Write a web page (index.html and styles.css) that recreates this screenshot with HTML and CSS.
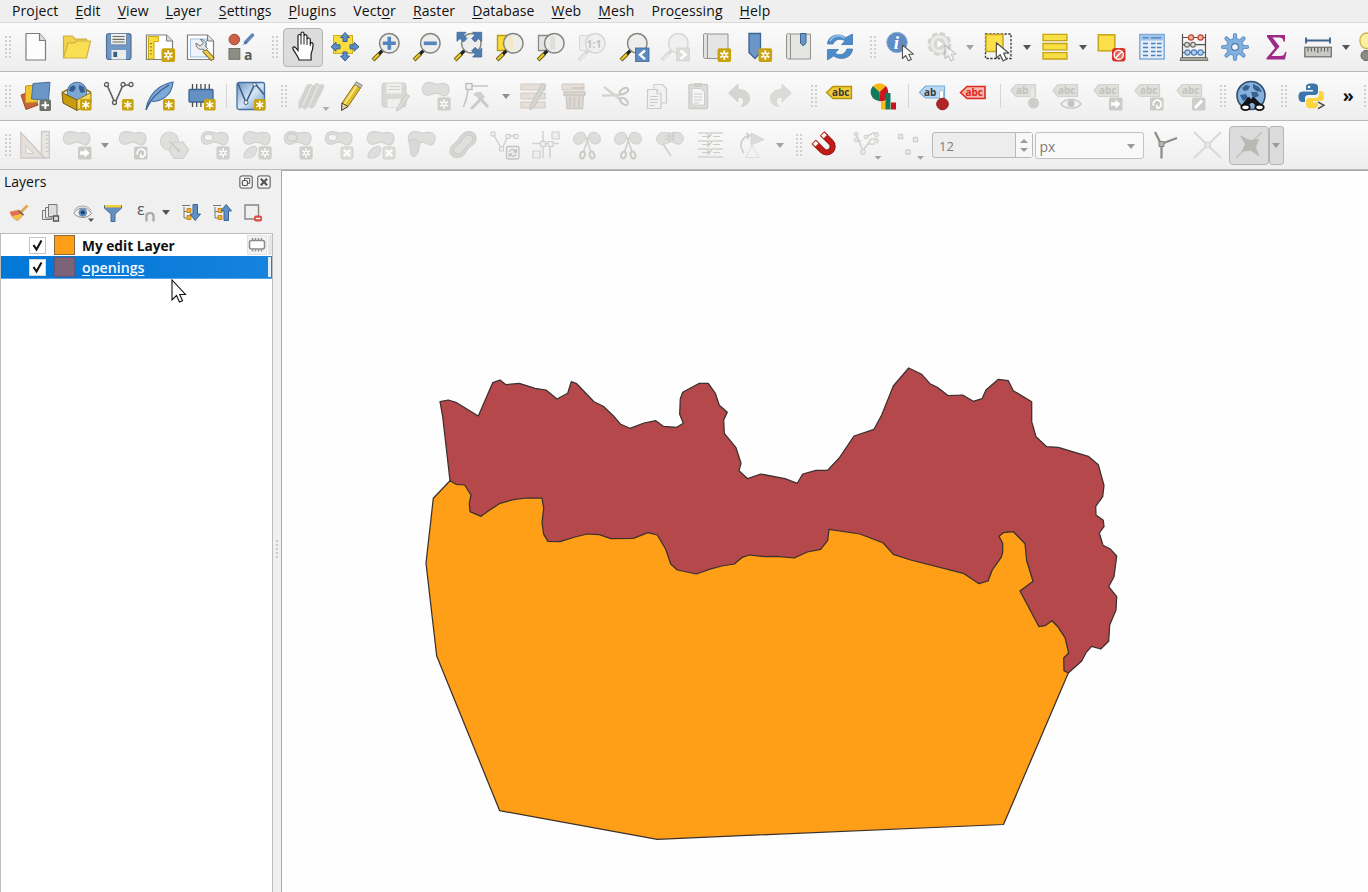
FILE: index.html
```html
<!DOCTYPE html>
<html lang="en">
<head>
<meta charset="utf-8">
<title>QGIS</title>
<link rel="stylesheet" href="styles.css">
</head>
<body>
<svg class="defs" aria-hidden="true">
  <defs>
    <linearGradient id="blueg" x1="0" y1="0" x2="1" y2="1"><stop offset="0" stop-color="#6a97c5"/><stop offset=".5" stop-color="#d6e6f5"/><stop offset="1" stop-color="#5f92c4"/></linearGradient>
    <linearGradient id="scroll" x1="0" x2="1"><stop offset="0" stop-color="#bdbdbd"/><stop offset=".3" stop-color="#e8e8e8"/><stop offset="1" stop-color="#dcdcdc"/></linearGradient>
    <g id="star"><rect x="16.500" y="16.300" width="13.600" height="13.600" rx="2" fill="#c9a30f"/><path d="M23.300 18.500v9.200M19.300 20.800l8 4.600M19.300 25.400l8-4.600" stroke="#fff" stroke-width="1.900"/><circle cx="23.300" cy="23.100" r="1.200" fill="#c9a30f"/></g>
    <g id="aster"><rect x="18" y="18" width="11.600" height="11.600" rx="1.500" fill="#c9a30f"/><path d="M23.800 19.800v8M20.300 21.800l7 4M20.300 25.800l7-4" stroke="#fff" stroke-width="1.500"/></g>
    <g id="gstar"><rect x="16.500" y="16.300" width="13.200" height="13.200" rx="2" fill="#cfcfcb"/><path d="M23.100 18.500v9M19.300 20.700l7.600 4.400M19.300 25.100l7.600-4.400" stroke="#fff" stroke-width="1.600"/><circle cx="23.100" cy="22.900" r="1.200" fill="#cfcfcb"/></g>
    <g id="gx"><rect x="17" y="17" width="12" height="12" rx="2" fill="#dededb" stroke="#cfcfcb"/><path d="M20 20l6 6M26 20l-6 6" stroke="#fff" stroke-width="2.200"/></g>
    <g id="garrow"><rect x="16" y="16.500" width="13.500" height="13" rx="1.500" fill="#cbcbc7"/><path d="M18 21.300h4.500v-2.800l5 4.500-5 4.500v-2.800H18z" fill="#fff"/></g>
    <g id="grot"><rect x="16" y="16.500" width="13.500" height="13" rx="1.500" fill="#cbcbc7"/><path d="M19.500 24.500a4 4 0 1 1 4.500 2.500M26 27h-3.200v-3.200" fill="none" stroke="#fff" stroke-width="1.700"/></g>
    <path id="blob" d="M1.300 7.500C1.500 3 5.500 1.200 9.500 1.700c3 .4 5 1.800 8.500 1.200 4-.8 9.500-1 10 4.300.3 3-1 8.300-5.500 7.600-3-.5-4.500-2.600-8-2.600-3.500.1-5.500 2.800-9 2C2 13.200 1.200 10.500 1.300 7.500z" fill="#dddfdd" stroke="#d1d2cf" stroke-width="1.200"/>
    <path id="drop" d="M2 26c0-4 4-8.500 9-9.500 3-.5 4 1 3.500 4-.8 5-4 7.500-9 7.500-2 0-3.500-.5-3.500-2z" fill="#dddfdd" stroke="#d1d2cf" stroke-width="1.200"/>
    <g id="lens"><path d="M8.700 21.500L2 28" stroke="#6b5a10" stroke-width="4"/><path d="M8.300 21.800L2.500 27.500" stroke="#ecc829" stroke-width="2.200"/><path d="M11.500 18.500L9 21" stroke="#222" stroke-width="3.200" stroke-linecap="round"/><circle cx="18.300" cy="11.300" r="9.800" fill="#ebebea" fill-opacity=".92" stroke="#85857f" stroke-width="1.500"/></g>
    <g id="glens"><path d="M11 19l-9 9" stroke="#d5d5d2" stroke-width="3.400"/><path d="M9 21.500L3 27.500" stroke="#eee" stroke-width="1.400"/><circle cx="18.300" cy="11.300" r="9.800" fill="#efefef" fill-opacity=".85" stroke="#d6d6d3" stroke-width="1.500"/></g>
    <path id="gtag" d="M1 9.500l5-6h19.500v12H6z" fill="#dfdfdb" stroke="#d2d2ce" stroke-width="1.200"/>
    <path id="ptr" d="M0 0v13.500l3.300-3 2.500 5.300 3-1.400-2.500-5.200h4.600z" fill="#fff" stroke="#55554f" stroke-width="1.100" stroke-linejoin="round"/>
    <g id="gcut"><path d="M1.500 9C2 4.500 6 2 9.500 2.300c3 .3 4 2 4 4.200 0 4-2 7-6.500 7.800-3.500.5-5.800-2-5.500-5.300zM28.500 9C28 4 24.500 2 21 2.300c-3 .3-4.500 2-4.500 4.200 0 4 2 7 6.500 7.500 3.500.3 5.500-2 5.500-5z" fill="#dcdedc" stroke="#d0d1ce"/><path d="M14 7l5 15M16.500 7L11.500 22" stroke="#d2d2ce" stroke-width="1.800"/><ellipse cx="10.500" cy="25" rx="2.300" ry="3.500" transform="rotate(20 10.500 25)" fill="none" stroke="#cbcbc7" stroke-width="2"/><ellipse cx="20" cy="25" rx="2.300" ry="3.500" transform="rotate(-20 20 25)" fill="none" stroke="#cbcbc7" stroke-width="2"/></g>
  </defs>
</svg>

<nav class="menubar">
  <span>Pro<u>j</u>ect</span><span><u>E</u>dit</span><span><u>V</u>iew</span><span><u>L</u>ayer</span><span><u>S</u>ettings</span><span><u>P</u>lugins</span><span>Vect<u>o</u>r</span><span><u>R</u>aster</span><span><u>D</u>atabase</span><span><u>W</u>eb</span><span><u>M</u>esh</span><span>Pro<u>c</u>essing</span><span><u>H</u>elp</span>
</nav>

<div class="toolbar">
  <i class="handle first"></i>
  <button class="tb"><svg viewBox="0 0 30 30"><path d="M5 1.500h13.500l6 7V28H5z" fill="#fdfdfd" stroke="#7d7d79" stroke-width="1.200"/><path d="M18.500 1.500v7h6" fill="#ddd" stroke="#7d7d79" stroke-width="1.200"/></svg></button>
  <button class="tb"><svg viewBox="0 0 30 30"><path d="M1.500 25.500V4h9l2.500 3.200h11.500v7" fill="#f3d34b" stroke="#cdae3c" stroke-width="1.200"/><path d="M1.500 26L6 10.800h6.500L14.500 9h14L24.500 26z" fill="#fadf52" stroke="#cfb040" stroke-width="1.200"/></svg></button>
  <button class="tb"><svg viewBox="0 0 30 30"><rect x="2.500" y="1.500" width="24.500" height="26" rx="2.500" fill="#7198c4" stroke="#4c6e96" stroke-width="1.200"/><path d="M6.500 1.500h16v11.300h-16z" fill="#ececea" stroke="#6580a0" stroke-width=".8"/><path d="M8.500 4.500h12M8.500 7.300h12M8.500 10h12" stroke="#6b6b66" stroke-width="1.200"/><rect x="7.500" y="18" width="14.500" height="9.500" fill="#ececea"/><rect x="9.300" y="19.800" width="3.800" height="5.200" fill="#355e88"/></svg></button>
  <button class="tb"><svg viewBox="0 0 30 30"><path d="M1.500 3h20l6 6v18.500h-26z" fill="#fff" stroke="#7d7d79" stroke-width="1.200"/><path d="M21.500 3v6h6" fill="#ddd" stroke="#7d7d79"/><path d="M3.500 4.500h10v5H9V27H3.500z" fill="#f8dc3f" stroke="#c9a81c"/><path d="M5 22h2M5 18.500h2M5 15h2M5 11.500h2" stroke="#9a8010"/><use href="#star"/></svg></button>
  <button class="tb"><svg viewBox="0 0 30 30"><path d="M1.500 3h20l6 6v18.500h-26z" fill="#fff" stroke="#7d7d79" stroke-width="1.200"/><path d="M21.500 3v6h6" fill="#ddd" stroke="#7d7d79"/><rect x="4.500" y="7" width="16" height="18" fill="#eef4fa" stroke="#9fc0e0"/><path d="M18 18l9 9.500" stroke="#7d6a20" stroke-width="5"/><path d="M18.500 18.500l8 8.500" stroke="#f3cf4b" stroke-width="3"/><path d="M10 11c-.5 5 4 7.500 7 6l2 2 2.500-2.500-2-2c1.500-3.500-.5-7-5-7l3 3.500-3.500 3z" fill="#e3e3df" stroke="#74746f"/></svg></button>
  <button class="tb"><svg viewBox="0 0 30 30"><circle cx="7.300" cy="7.500" r="5.300" fill="#cb6049" stroke="#a54632"/><path d="M25.500 3l-7 7.500" stroke="#6089bb" stroke-width="3.500" stroke-linecap="round"/><path d="M19 9l-3.500 4.500 4.500-3" fill="#48678c"/><rect x="2" y="16.500" width="10.800" height="10.800" fill="#8c8f85" stroke="#6d7066"/><text x="17" y="27.500" class="glyph-a">a</text></svg></button>
  <i class="handle"></i>
  <button class="tb on"><svg viewBox="0 0 30 30"><path d="M11 27.500c-1.500-4.500-5-7.500-6.200-11.200-.3-1.500 1.800-2 3-.3L10 18.500V4c0-2 2.800-2 3 0V1.500c.2-2 2.800-2 3 0V4c.3-2 3-1.800 3 .3V7c.4-1.500 3.300-1.500 3.300.8V12c.5-2 2.800-1.700 2.800.3 0 5-.8 6.700-2 9.400V28H11z" fill="#fff" stroke="#1d1d1d" stroke-width="1.200"/><path d="M13 4v8.500M16 4v8.500M19 7v6M22.300 11v3" stroke="#1d1d1d"/></svg></button>
  <button class="tb"><svg viewBox="0 0 30 30"><rect x="3.500" y="3.500" width="19" height="18" fill="#f9dd3f" stroke="#cfae1b"/><path d="M15 .5l4.500 5H17v4h-4v-4h-2.500zM15 29l4.500-5H17v-4h-4v4h-2.500zM1 14.800l5-4.500v2.500h4v4H6v2.500zM29 14.800l-5-4.500v2.500h-4v4h4v2.500z" fill="#5c8dc4" stroke="#365f8f"/></svg></button>
  <button class="tb"><svg viewBox="0 0 30 30"><use href="#lens"/><path d="M18.300 4.800v13M11.800 11.300h13" stroke="#5585bd" stroke-width="3.600"/></svg></button>
  <button class="tb"><svg viewBox="0 0 30 30"><use href="#lens"/><path d="M11.800 11.300h13" stroke="#5585bd" stroke-width="3.600"/></svg></button>
  <button class="tb"><svg viewBox="0 0 30 30"><use href="#lens"/><path d="M4 .3h9L10.500 3l3.500 3.500-3.500 3.500L7 6.500 4 9.300zM28.700.3h-9L22.200 3l-3.500 3.500 3.500 3.500 3.500-3.500 3 2.800zM28.700 25h-9l2.500-2.700-3.500-3.500 3.500-3.500 3.500 3.500 3-2.800z" fill="#4f7db3" stroke="#3d6795" stroke-width=".8"/></svg></button>
  <button class="tb"><svg viewBox="0 0 30 30"><path d="M2.500 3.500h13v15h-13z" fill="#f9dc3c" stroke="#bb9b16" stroke-width="1.400"/><use href="#lens"/><path d="M14 6l4-1.500v14l-4-2z" fill="#f5e9c4"/></svg></button>
  <button class="tb"><svg viewBox="0 0 30 30"><path d="M2.500 3.500h13v15h-13z" fill="#e4e4e2" stroke="#8a8a86" stroke-width="1.300"/><use href="#lens"/><path d="M14 5l5-1v14l-5-1.500z" fill="#dededc"/></svg></button>
  <button class="tb"><svg viewBox="0 0 30 30"><path d="M2.500 3.500h13v15h-13z" fill="#efefef" stroke="#d6d6d3"/><use href="#glens"/><text x="9.500" y="15.500" class="one">1:1</text></svg></button>
  <button class="tb"><svg viewBox="0 0 30 30"><use href="#lens"/><rect x="16.500" y="16" width="13.500" height="13.500" fill="#5b8ac0" stroke="#3d6795" stroke-width=".8"/><path d="M26 18.500l-5 4.300 5 4.300" fill="none" stroke="#fff" stroke-width="2.400"/></svg></button>
  <button class="tb"><svg viewBox="0 0 30 30"><use href="#glens"/><rect x="16.500" y="16" width="13" height="13" fill="#dcdcda" stroke="#d4d4d1" stroke-width=".8"/><path d="M20.500 18.500l5 4.200-5 4.200" fill="none" stroke="#fff" stroke-width="2.400"/></svg></button>
  <button class="tb"><svg viewBox="0 0 30 30"><path d="M6 2h21v24.500H6z" fill="#e5e5e4" stroke="#91918d"/><path d="M6.500 26.500h-2c-2 0-2-1.500-2-3V3c0-2 4-2 4 0z" fill="url(#scroll)" stroke="#91918d"/><use href="#star"/></svg></button>
  <button class="tb"><svg viewBox="0 0 30 30"><path d="M7 1.500h11.500v19l-5.500 6-6-6z" fill="#6b96c8" stroke="#3d638f" stroke-width="1.300"/><use href="#star"/></svg></button>
  <button class="tb"><svg viewBox="0 0 30 30"><path d="M6 2h20.500v25H6z" fill="#e5e5e4" stroke="#91918d"/><path d="M6.500 27h-2c-2 0-2-1.500-2-3V3c0-2 4-2 4 0z" fill="url(#scroll)" stroke="#91918d"/><path d="M16.500 1.500h5.500v9.500l-2.800 3-2.700-3z" fill="#6b96c8" stroke="#3d638f"/></svg></button>
  <button class="tb"><svg viewBox="0 0 30 30"><path d="M2.500 12C3 3 14 .5 21 5.500L27.500 2v10.500h-11L20 9c-4-3-10-2-12 3zM27.500 17c-.5 9-11.500 12-19 7L2.500 28V17.500h11L10 21c4 3 10 2 12-4z" fill="#4d8cca" stroke="#3f78b2" stroke-width=".8"/><path d="M5 9C8 3 15 2.500 20 6" fill="none" stroke="#8fbbe4" stroke-width="2"/></svg></button>
  <i class="handle"></i>
  <button class="tb"><svg viewBox="0 0 30 30"><circle cx="11" cy="10.500" r="10.300" fill="#5e8cc3" stroke="#8fb1d8" stroke-width=".8"/><text x="7.800" y="17.200" class="info">i</text><use href="#ptr" x="16.500" y="13"/></svg></button>
  <button class="tb"><svg viewBox="0 0 30 30"><circle cx="12.500" cy="12" r="10.500" fill="#ececea" stroke="#d4d4d1" stroke-width="3" stroke-dasharray="5.500 2.750"/><circle cx="12.500" cy="12" r="9.500" fill="#ececea" stroke="#d0d0cd"/><circle cx="12.500" cy="12" r="6" fill="#d8d8d5"/><path d="M10.500 8.500l5.500 3.500-5.500 3.500z" fill="#fff"/><use href="#ptr" x="18" y="13" opacity=".3"/></svg></button>
  <i class="dd"></i>
  <button class="tb"><svg viewBox="0 0 30 30"><rect x="2.500" y="2" width="25.500" height="24.500" fill="#f4f4f3" stroke="#333" stroke-width="1.300" stroke-dasharray="2.300 1.500"/><rect x="3" y="2.500" width="17" height="17" fill="#fbe04b" stroke="#c9a91d" stroke-width="1.600"/><use href="#ptr" x="12.500" y="11" transform="translate(-1 -2) scale(1.150)"/></svg></button>
  <i class="dd dark"></i>
  <button class="tb"><svg viewBox="0 0 30 30"><path d="M3 2.300h24v6.300H3zM3 11.500h24v6.300H3zM3 20.700h24V27H3z" fill="#f8df43" stroke="#c6a413" stroke-width="1.300"/></svg></button>
  <i class="dd dark"></i>
  <button class="tb"><svg viewBox="0 0 30 30"><rect x="2.300" y="2.800" width="16.500" height="16" fill="#fbe04b" stroke="#c9a91d" stroke-width="1.600"/><rect x="16" y="16" width="13.500" height="13.500" rx="3" fill="#d9332a"/><circle cx="22.700" cy="22.700" r="4.600" fill="#e36a60" stroke="#fff" stroke-width="1.400"/><path d="M19.700 25.700l6-6" stroke="#fff" stroke-width="1.500"/></svg></button>
  <button class="tb"><svg viewBox="0 0 30 30"><rect x="2.800" y="2.500" width="24.400" height="24.500" fill="#e3eefa" stroke="#82abd8" stroke-width="1.500"/><path d="M3 3h24v5.500H3z" fill="#9fc4ec"/><path d="M6 5.800h5.500M14 5.800h10M6 11.500h5M14 11.500h4.500M20 11.500h4.500M6 15.500h5M14 15.500h4.500M20 15.500h4.500M6 19.500h5M14 19.500h4.500M20 19.500h4.500M6 23.500h5M14 23.500h4.500M20 23.500h4.500" stroke="#4c7fb8" stroke-width="1.300"/></svg></button>
  <button class="tb"><svg viewBox="0 0 30 30"><path d="M3.500 2v24M26.500 2v24M3.500 5.500h23M3.500 12.700h23M3.500 20.500h23" stroke="#55554f" stroke-width="1.200"/><path d="M2 25.500h26l1 3H1z" fill="#a7a79f" stroke="#62625b" stroke-width=".8"/><g stroke-width="1.200"><circle cx="12" cy="5.500" r="2.600" fill="#f6b6a4" stroke="#c23f2c"/><circle cx="21.500" cy="5.500" r="2.600" fill="#f6b6a4" stroke="#c23f2c"/><circle cx="8" cy="12.700" r="2.400" fill="#ddd" stroke="#6e6e68"/><circle cx="14" cy="12.700" r="2.400" fill="#ddd" stroke="#6e6e68"/><circle cx="8.500" cy="20.500" r="2.600" fill="#b7d2f0" stroke="#4c7fb8"/><circle cx="15" cy="20.500" r="2.600" fill="#b7d2f0" stroke="#4c7fb8"/><circle cx="21.500" cy="20.500" r="2.600" fill="#b7d2f0" stroke="#4c7fb8"/></g></svg></button>
  <button class="tb"><svg viewBox="0 0 30 30"><g stroke="#5b8fc6" stroke-width="4.200" stroke-linecap="round"><path d="M15 3v24M3 15h24M6.500 6.500l17 17M23.500 6.500l-17 17"/></g><circle cx="15" cy="15" r="8.500" fill="#84b0e0" stroke="#5b8fc6"/><g stroke="#84b0e0" stroke-width="2.400" stroke-linecap="round"><path d="M15 3v24M3 15h24M6.500 6.500l17 17M23.500 6.500l-17 17"/></g><circle cx="15" cy="15" r="3.400" fill="#f5f5f5" stroke="#4a7bb0" stroke-width="1.200"/></svg></button>
  <button class="tb"><svg viewBox="0 0 30 30"><path d="M6 3h18v6.500h-1.500C22 6.500 21 5.500 18 5.500h-6.500l7 9L10.500 24H19c3 0 4.500-1 5-4h1.500L24 27.500H5.500V26l8.500-10L6 4.800z" fill="#9e2a88"/></svg></button>
  <button class="tb"><svg viewBox="0 0 30 30"><path d="M3 8.500h24M3 5.500v6M27 5.500v6" stroke="#3f638e" stroke-width="1.900"/><rect x="1.800" y="15.300" width="26.500" height="9.500" fill="#c9c9c5" stroke="#74746e" stroke-width="1.300"/><path d="M5 16v3.500M8.300 16v3.500M11.600 16v3.500M14.900 16v5M18.200 16v3.500M21.500 16v3.500M24.800 16v3.500" stroke="#55554f"/></svg></button>
  <i class="dd dark"></i>
  <button class="tb"><svg viewBox="0 0 30 30"><rect x="1" y="1" width="26" height="15.500" rx="7" fill="#fcf0a0" stroke="#cbb24a" stroke-width="1.300"/><circle cx="7" cy="23.500" r="5" fill="#8c8c85" stroke="#62625b"/></svg></button>
</div>

<div class="toolbar">
  <i class="handle first"></i>
  <button class="tb"><svg viewBox="0 0 30 30"><path d="M0 14l11-4 6 14-12 4.500z" fill="#c5653b" stroke="#a04a26"/><path d="M4.500 5l12-1v17l-12 1z" fill="#f3c62f" stroke="#c49714"/><path d="M12 2.500l17-1.300-1.500 18-17-1.200z" fill="#6b96c8" stroke="#486f9c"/><rect x="18.500" y="18.500" width="11.500" height="11.500" rx="1.500" fill="#6f7268"/><path d="M24.300 20.500v7.500M20.500 24.200H28" stroke="#fff" stroke-width="2"/></svg></button>
  <button class="tb"><svg viewBox="0 0 30 30"><circle cx="15" cy="11" r="9.800" fill="#7ba7d4" stroke="#476f9d"/><path d="M8 6l4-2 2 3-3 4-4-1zM17 4l5 2 1 5-4 1-2-4z" fill="#365f8f"/><path d="M0 11.500l15 7.500v10.500L1 22z" fill="#c99c0e" stroke="#73590b"/><path d="M15 19l14-7.500V22l-14 7.500z" fill="#f4d863" stroke="#8f7118"/><path d="M0 11.500l6-3M29 11.500l-5-3" stroke="#8f7118" stroke-width="1.500"/><use href="#aster"/></svg></button>
  <button class="tb"><svg viewBox="0 0 30 30"><path d="M3 4l8 18 8-18h8" fill="none" stroke="#5d5d58" stroke-width="1.600"/><g fill="#fff" stroke="#5d5d58" stroke-width="1.300"><circle cx="2.500" cy="3.500" r="2"/><circle cx="10.500" cy="21.500" r="2"/><circle cx="19" cy="3.500" r="2"/><circle cx="27" cy="3.500" r="2"/></g><use href="#aster"/></svg></button>
  <button class="tb"><svg viewBox="0 0 30 30"><path d="M1 28.500C2 20 7 11 15 6c4-2.500 9-4 13-5-.5 6-3 12-9 16-4 2.500-9 3.500-12 3.500" fill="#7da9d8" stroke="#466f9e" stroke-width="1.200"/><path d="M1 29C4 20 12 11 24 4" fill="none" stroke="#355d8b" stroke-width="1.300"/><use href="#aster"/></svg></button>
  <button class="tb"><svg viewBox="0 0 30 30"><path d="M6.500 3v6M10.700 3v6M14.900 3v6M19.100 3v6M23.300 3v6M6.500 20v6M10.700 20v6M14.900 20v6" stroke="#4e4e49" stroke-width="1.300"/><rect x="3" y="8.500" width="24" height="12.500" rx="1" fill="#6590c4" stroke="#3d6592" stroke-width="1.300"/><use href="#aster"/></svg></button>
  <i class="sep"></i>
  <button class="tb"><svg viewBox="0 0 30 30"><rect x="1" y="1.500" width="27.500" height="27" rx="2" fill="url(#blueg)" stroke="#44709f" stroke-width="1.300"/><path d="M2 2.500l8 19 9-19 9 11" fill="none" stroke="#3d5f86" stroke-width="1.600"/><circle cx="10" cy="21.500" r="2" fill="#fff" stroke="#3d5f86"/><circle cx="18.500" cy="3.500" r="1.700" fill="#fff" stroke="#3d5f86"/><use href="#aster"/></svg></button>
  <i class="handle"></i>
  <button class="tb"><svg viewBox="0 0 30 30"><path d="M1.500 22L10 4l4-1 2 2 4-3 2.500 2 3.500-.5 1 2.500L17 26l-3.500 1.500-1-2.500-5 3.500-2-2.500-3.500 2z" fill="#d2d2cf" stroke="#d9d9d6"/><path d="M6 24L14.500 5M12 25L21 5" stroke="#e9e9e7" stroke-width="1.200"/><path d="M25.500 26h7l-3.500 4z" fill="#aeaeab"/></svg></button>
  <button class="tb"><svg viewBox="0 0 30 30"><path d="M3 22L15.500 3.500l6 3.500L9 25.500 3 29z" fill="#e3bf2a" stroke="#8a7318"/><path d="M5.500 23L17.500 5" stroke="#fae98c" stroke-width="1.800"/><path d="M15.500 3.500L17.300.8l6 3.500L21.500 7z" fill="#bdbdb9" stroke="#8a8a86"/><path d="M3 22l6 3.500L2.500 29.500z" fill="#e6cfa0" stroke="#444"/></svg></button>
  <button class="tb"><svg viewBox="0 0 30 30"><rect x="2" y="2" width="24" height="24" rx="2.500" fill="#d8d8d5" stroke="#cececb"/><path d="M6.500 2.500h15v10h-15zM7.500 18h13v8h-13z" fill="#efefed"/><path d="M8.500 5.500h11M8.500 8.500h11" stroke="#d0d0cd"/><path d="M17 27l9-14 3.500 2-9 13-4 2z" fill="#dcdcd9" stroke="#c9c9c6"/></svg></button>
  <button class="tb"><svg viewBox="0 0 30 30"><use href="#blob"/><use href="#gstar"/></svg></button>
  <button class="tb"><svg viewBox="0 0 30 30"><path d="M6.500 5C6 13 4 20 1.500 26M6.500 5H26" fill="none" stroke="#c6c6c3" stroke-width="1.500"/><rect x="4" y="2.500" width="6" height="6" fill="#f2f2f2" stroke="#bababa" stroke-width="1.300"/><path d="M9 28l13-13M14 13l12 13" stroke="#cbcbc8" stroke-width="3"/><path d="M11 14c2-3 5-4 8-3l3 4-4 2z" fill="#d0d0cd"/></svg></button>
  <i class="dd mid"></i>
  <button class="tb"><svg viewBox="0 0 30 30"><path d="M2 3h24v6H2zM2 12h24v6H2zM2 21h24v6H2z" fill="#e6dfd8" stroke="#d2ccc6" stroke-width="1.200"/><path d="M11 25L23 2.500l4 2L15 26l-4 3z" fill="#d4d4d1" stroke="#c4c4c1"/></svg></button>
  <button class="tb"><svg viewBox="0 0 30 30"><path d="M2 3h22v6H2z" fill="#e6dfd8" stroke="#cfc9c3"/><path d="M4 11h21v3H4zM6 14h17.500l-1 13.500H7z" fill="#ddd8d3" stroke="#cac6c1" stroke-width="1.300"/><path d="M10 16v10M14.500 16v10M19 16v10M12 7h12" stroke="#cac6c1" stroke-width="1.400"/></svg></button>
  <button class="tb"><svg viewBox="0 0 30 30"><path d="M1 14.500l19-.5M3 6l17 13" stroke="#d3d3d0" stroke-width="2.400"/><ellipse cx="23" cy="10" rx="4.500" ry="2.500" transform="rotate(-30 23 10)" fill="none" stroke="#c6c6c3" stroke-width="2"/><ellipse cx="23" cy="20.500" rx="4.500" ry="2.700" transform="rotate(40 23 20.500)" fill="none" stroke="#c6c6c3" stroke-width="2"/></svg></button>
  <button class="tb"><svg viewBox="0 0 30 30"><g fill="#f2f2f2" stroke="#cbcbc8" stroke-width="1.200"><path d="M11 3.500h8.500l4 4V22H11z"/><path d="M4.500 8.500H14l4 4.500v14.500H4.500z"/><path d="M14 8.500V13h4M7 15.500h8M7 18.500h8M7 21.500h8M7 24.500h5"/></g></svg></button>
  <button class="tb"><svg viewBox="0 0 30 30"><rect x="5" y="3.500" width="18.500" height="24" rx="1" fill="#dcdcda" stroke="#cbcbc8" stroke-width="1.400"/><path d="M8 7.500h9l3.500 3.500v13H8z" fill="#f5f5f5" stroke="#cdcdca"/><path d="M10 2h8v4h-8z" fill="#cdcdca"/><path d="M10 13h8M10 16h8M10 19h8M10 22h5" stroke="#cdcdca"/></svg></button>
  <button class="tb"><svg viewBox="0 0 30 30"><path d="M3.500 12l9.500-9v5.500c8 0 12 4 11.500 9.500 0 4-3.500 7-8.500 7.500 3-2.500 5-9-3-9.500v5z" fill="#d5d5d1" stroke="#cecdca" stroke-width=".8"/></svg></button>
  <button class="tb"><svg viewBox="0 0 30 30"><path d="M25.500 12L16 3v5.500C8 8.500 4 12.500 4.500 18c0 4 3.500 7 8.500 7.500-3-2.500-5-9 3-9.500v5z" fill="#dbdbd8" stroke="#d3d3d0" stroke-width=".8"/></svg></button>
  <i class="handle"></i>
  <button class="tb"><svg viewBox="0 0 30 30"><path d="M-.5 11.500l6.500-6h18.500v12H6z" fill="#f1cb35" stroke="#b6930e" stroke-width="1.300"/><text x="5" y="14.700" class="abc">abc</text></svg></button>
  <button class="tb"><svg viewBox="0 0 30 30"><path d="M10.500 11L4 5a9 9 0 0 1 13 0z" fill="#fab90f"/><path d="M10.500 11L4 5a9 9 0 0 0 6 15z" fill="#14795a"/><path d="M10.500 11L17 5c3 4 3 10-.5 14z" fill="#c5161c"/><path d="M10.500 11L17 19c-2 1.200-5 1.500-7 1z" fill="#c5161c"/><path d="M12 20.500h5v8h-5z" fill="#fab90f"/><path d="M16.500 12h5v16.500h-5z" fill="#14795a"/><path d="M22 21.500h5v7h-5z" fill="#c5161c"/></svg></button>
  <i class="sep"></i>
  <button class="tb"><svg viewBox="0 0 30 30"><path d="M.5 11.500l6-6.500h19v12H6.500z" fill="#b9d9f5" stroke="#78aee0" stroke-width="1.200"/><text x="5" y="14.700" class="abc">ab</text><path d="M22.500 10v12" stroke="#fff" stroke-width="3.600"/><path d="M20.500 18v-7c0-2 4-2 4 0v7" fill="none" stroke="#b5b5b1"/><circle cx="23.500" cy="23" r="5.800" fill="#b02525" stroke="#8e1b1b"/></svg></button>
  <button class="tb"><svg viewBox="0 0 30 30"><path d="M.5 11.500l6.500-6h18v12H7z" fill="#f4b7ae" stroke="#e02720" stroke-width="1.600"/><text x="5.500" y="14.700" class="abc r">abc</text></svg></button>
  <i class="sep"></i>
  <button class="tb"><svg viewBox="0 0 30 30"><use href="#gtag"/><text x="6" y="13.200" class="abc g">ab</text><path d="M22.500 8v12" stroke="#e8e8e6" stroke-width="3"/><circle cx="23.500" cy="22" r="5.500" fill="#cecdca"/></svg></button>
  <button class="tb"><svg viewBox="0 0 30 30"><use href="#gtag"/><text x="6" y="13.200" class="abc g">abc</text><path d="M9 23c4-6 16-6 20 0-4 5.500-16 5.500-20 0z" fill="#f2f2f2" stroke="#c9c9c6" stroke-width="1.400"/><circle cx="19" cy="22.500" r="3.500" fill="#c3c3c0"/></svg></button>
  <button class="tb"><svg viewBox="0 0 30 30"><use href="#gtag"/><text x="6" y="13.200" class="abc g">abc</text><use href="#garrow"/></svg></button>
  <button class="tb"><svg viewBox="0 0 30 30"><use href="#gtag"/><text x="6" y="13.200" class="abc g">abc</text><use href="#grot"/></svg></button>
  <button class="tb"><svg viewBox="0 0 30 30"><use href="#gtag"/><text x="6" y="13.200" class="abc g">abc</text><rect x="16" y="16.500" width="13.500" height="13" rx="1.500" fill="#cecdca"/><path d="M19 27l7-7.500" stroke="#fff" stroke-width="3"/></svg></button>
  <i class="handle"></i>
  <button class="tb"><svg viewBox="0 0 30 30"><circle cx="15" cy="14.500" r="14" fill="#85b0dc" stroke="#2f4d6e" stroke-width="1.600"/><path d="M6 7l4-3 4 1-2 4-4 1zM17 3l6 3 3 5-6-1-3-3zM4 14l6-1 2 4-5 3zM15 11h6l2 4-6 2z" fill="#355f90"/><path d="M5 25l6.500-8.500 2-.5 1.500 2.500 1.500-2.500 2 .5L27 25l-6 1-4-4h-2l-4 4z" fill="#15151a"/><ellipse cx="9.500" cy="26.300" rx="4.200" ry="2.800" fill="#fff" stroke="#111" stroke-width="1.900"/><ellipse cx="23.500" cy="26.300" rx="4.200" ry="2.800" fill="#fff" stroke="#111" stroke-width="1.900"/></svg></button>
  <i class="handle"></i>
  <button class="tb"><svg viewBox="0 0 30 30"><path d="M15 2.500c-6 0-6 2-6 3.500v3h7v1.500H6c-4 0-4.500 3-4.500 5.500s1 5 4 5h2.500v-4c0-2 1.500-3 3.500-3H18c2 0 3-1.500 3-3V6c0-2-1.500-3.500-6-3.500z" fill="#3a76ab"/><path d="M22 10v3.500c0 2-1.500 3.500-3.500 3.500H12c-2 0-3 1-3 3v4c0 2.500 2 3.500 6 3.500s6-1.500 6-3.500v-2.500h-5V20h8c2.500 0 3-3 3-5s-.5-5-3-5z" fill="#fbd53e"/><circle cx="12" cy="6" r="1.300" fill="#fff"/><path d="M21 21l6 3.200-6 3.500" fill="none" stroke="#fff" stroke-width="3"/><path d="M21 21l6 3.200-6 3.500" fill="none" stroke="#55554f" stroke-width="1.600"/></svg></button>
  <span class="more">»</span>
  <i class="handle last"></i>
</div>

<div class="toolbar snap">
  <i class="handle first"></i>
  <button class="tb"><svg viewBox="0 0 30 30"><path d="M.8 2.500l24 25.500H.8z" fill="#e6dfda" stroke="#cccac7" stroke-width="1.300"/><path d="M6 15.500l7.500 8H6z" fill="#f3f3f3" stroke="#cccac7"/><path d="M21.500 1.500h7.800V28h-4.500l-3.300-3.500z" fill="#e9e5e1" stroke="#cccac7" stroke-width="1.300"/><path d="M25.500 5.500h3.500M25.500 9.500h3.500M25.500 13.500h3.500M25.500 17.500h3.500M25.500 21.500h3.500" stroke="#cccac7"/></svg></button>
  <button class="tb"><svg viewBox="0 0 30 30"><use href="#blob"/><use href="#garrow"/></svg></button>
  <i class="dd mid"></i>
  <button class="tb"><svg viewBox="0 0 30 30"><use href="#blob"/><use href="#grot"/></svg></button>
  <button class="tb"><svg viewBox="0 0 30 30"><circle cx="10.500" cy="11" r="9" fill="#dfe0de" stroke="#d2d2cf" stroke-width="1.200"/><path d="M15 12h9l5.500 8-5.500 8.500h-9L10 20z" fill="#dfe0de" stroke="#cfcfcc" stroke-width="1.200"/><path d="M10.500 11l9 9.500" stroke="#c8c8c5" stroke-width="1.300"/><circle cx="19.500" cy="20.500" r="1.500" fill="#c8c8c5"/></svg></button>
  <button class="tb"><svg viewBox="0 0 30 30"><use href="#blob"/><ellipse cx="8.500" cy="7.500" rx="4.500" ry="3.300" fill="#f4f4f4" stroke="#cecdca" stroke-width="1.200"/><use href="#gstar"/></svg></button>
  <button class="tb"><svg viewBox="0 0 30 30"><use href="#blob"/><use href="#drop"/><use href="#gstar"/></svg></button>
  <button class="tb"><svg viewBox="0 0 30 30"><use href="#blob"/><ellipse cx="9" cy="7.500" rx="5" ry="3.800" fill="#e0e1df" stroke="#c9c9c6" stroke-width="1.200"/><use href="#gstar"/></svg></button>
  <button class="tb"><svg viewBox="0 0 30 30"><use href="#blob"/><ellipse cx="8.500" cy="7.500" rx="4.500" ry="3.300" fill="#f4f4f4" stroke="#cecdca" stroke-width="1.200"/><use href="#gx"/></svg></button>
  <button class="tb"><svg viewBox="0 0 30 30"><use href="#blob"/><use href="#drop"/><use href="#gx"/></svg></button>
  <button class="tb"><svg viewBox="0 0 30 30"><use href="#blob"/><path d="M2 11l6-2 5 4-2 10-3.500 4L4 25z" fill="#d9dad6" stroke="#cecfcb"/></svg></button>
  <button class="tb"><svg viewBox="0 0 30 30"><path d="M2 21c0-6 5-7 8-11 3-5 6-8.500 11-8.500 5.500 0 7.500 4 7 8-.6 5.500-5 5.500-8 9.500-3 4.500-5 8.500-10.500 8.500C4.500 27.500 2 25 2 21z" fill="#d6d7d3" stroke="#cbccc8"/><path d="M5.500 21c0-4 5-6 7.500-9.500 2.500-4 4.500-6.500 8-6.500 3 0 4 2 3.500 4.500-.5 3.500-4.500 4.500-7.500 8.500-3 4.500-4 6-7.500 6-2.500 0-4-1-4-3z" fill="#dee0dd" stroke="#c9cac6"/></svg></button>
  <button class="tb"><svg viewBox="0 0 30 30"><path d="M3 4l9 15 6-13h8" fill="none" stroke="#cfcfcc" stroke-width="1.400"/><g fill="#f2f2f2" stroke="#c9c9c6"><path d="M1 2h4v4H1zM16 4.500h4v4h-4zM24 4.500h4v4h-4zM9.500 17h4v4h-4z"/></g><rect x="16.500" y="16.500" width="12.500" height="12.500" rx="1.500" fill="#efefef" stroke="#c2c2bf" stroke-width="1.300"/><path d="M19.300 21.700c1-3 5-3 6.500-.2M26.300 24c-1 3-5 3-6.500.2M26.300 19v3h-3M19.300 27v-3h3" fill="none" stroke="#c2c2bf" stroke-width="1.400"/></svg></button>
  <button class="tb"><svg viewBox="0 0 30 30"><path d="M12 1v27M1 13.500h27M19 14v14" stroke="#d3d3d0" stroke-width="1.600"/><g fill="#efefef" stroke="#cfcfcc" stroke-width="1.200"><path d="M9.500 11.500h5v5h-5zM17 11.500h5v5h-5zM21 2h7v7h-7zM2 21h7v7H2z"/></g></svg></button>
  <button class="tb"><svg viewBox="0 0 30 30"><use href="#gcut"/></svg></button>
  <button class="tb"><svg viewBox="0 0 30 30"><use href="#gcut"/></svg></button>
  <button class="tb"><svg viewBox="0 0 30 30"><path d="M1.500 9C2 4 6 2 10 2.500c4 1 6 1 9 0 6-1 9.500 2 9.300 6-.3 5-4.500 7-8.300 5-3-2-5-2-7.500-.5C7 16 1.500 14 1.500 9z" fill="#dddfdd" stroke="#d1d2cf"/><path d="M10 6h10M10 9h10M14 2v11M18 2v9" stroke="#c9c9c6"/><path d="M8 14l8 12" stroke="#cbcbc8" stroke-width="1.400"/></svg></button>
  <button class="tb"><svg viewBox="0 0 30 30"><path d="M2 3h25M2 11h25M2 19h25M2 27h25" stroke="#d3d3d0" stroke-width="1.300"/><path d="M6 6.500h7l3-2.500M24 6.500h-7M6 14.500h7l3-2.500M24 14.500h-7M6 22.500h7l3-2.500M24 22.500h-7M11 4l3 2.500-3 2M11 12l3 2.500-3 2M11 20l3 2.500-3 2" fill="none" stroke="#cbcbc8" stroke-width="1.200"/></svg></button>
  <button class="tb"><svg viewBox="0 0 30 30"><path d="M14 3l13 6.500-13 5.500z" fill="#dcdddb" stroke="#d3d3d0"/><path d="M15 15l7 12.500H9z" fill="#f2f2f2" stroke="#dededb"/><path d="M7 23C1.500 16 4 8 11.500 5.500M9 3l3.500 2.500L10 9" fill="none" stroke="#cbcbc8" stroke-width="1.500"/></svg></button>
  <i class="dd"></i>
  <i class="handle"></i>
  <button class="tb"><svg viewBox="0 0 30 30"><g transform="rotate(-45 15 15)"><path d="M6 5v11.500a8.500 8.500 0 0 0 17 0V5h-5.200v11.500a3.300 3.300 0 0 1-6.600 0V5z" fill="#c31a17" stroke="#981210"/><path d="M6 4.500h5.200V9H6zM17.800 4.500H23V9h-5.200z" fill="#fff" stroke="#b92b20"/></g></svg></button>
  <button class="tb"><svg viewBox="0 0 30 30"><path d="M4 4l7 17L19 9h6M4 10l5 1M14 7l7-4h5M15 14h8" fill="none" stroke="#d2d2cf" stroke-width="1.700"/><g fill="#e9e9e8" stroke="#cfcfcc"><circle cx="4" cy="4" r="2"/><circle cx="4" cy="10" r="2"/><circle cx="14" cy="7" r="2"/><circle cx="24.500" cy="5" r="2"/><circle cx="24.500" cy="11" r="2"/><circle cx="11" cy="22" r="2.500"/></g><path d="M22.500 26h7L26 29.800z" fill="#a3a3a0"/></svg></button>
  <button class="tb"><svg viewBox="0 0 30 30"><g fill="#efefee" stroke="#cfcfcc" stroke-width="1.300"><path d="M4.500 4.500h4v4h-4zM19.500 7.500h4v4h-4zM12 20h4v4h-4z"/></g><path d="M23 26h7l-3.500 3.800z" fill="#a3a3a0"/></svg></button>
  <div class="spin"><span>12</span><b><i class="up"></i><i class="down"></i></b></div>
  <div class="combo"><span>px</span><i></i></div>
  <button class="tb"><svg viewBox="0 0 30 30"><path d="M4 2l6 12M10 14l16-6M10.500 14v14.500" stroke="#8e8e88" stroke-width="2.300"/><path d="M8 11.500h5v5H8z" fill="#b5b5b0" stroke="#85857f"/></svg></button>
  <button class="tb"><svg viewBox="0 0 30 30"><path d="M2 2l27 26M29 2L2 28" stroke="#d8d8d5" stroke-width="2"/><circle cx="15.500" cy="15" r="3" fill="#e6e6e4" stroke="#d3d3d0"/></svg></button>
  <button class="tb on pair"><svg viewBox="0 0 30 30"><path d="M2 28L28 2" stroke="#c3c3c0" stroke-width="1.600"/><path d="M5.500 5l10 5 10-1-3.500 8 3.500 9.500-9-6-9 1.500 3.500-8z" fill="#b9b9b4"/></svg></button>
  <span class="drop-on"><i></i></span>
</div>

<main class="work">
  <section class="dock">
    <header class="dock-title"><span>Layers</span>
      <svg class="dock-btns" viewBox="0 0 32 14"><g fill="#f4f4f4" stroke="#777" stroke-width="1.300"><rect x=".8" y=".8" width="12.500" height="12.400" rx="2.500"/><rect x="18.700" y=".8" width="12.500" height="12.400" rx="2.500"/></g><path d="M5.500 5V3.300h5.200v5H9" fill="none" stroke="#555"/><rect x="3.300" y="5.500" width="5.200" height="5" rx="1.500" fill="none" stroke="#555" stroke-width="1.200"/><path d="M21.800 3.800l6.300 6.400M28.100 3.800l-6.300 6.400" stroke="#555" stroke-width="2.200"/></svg>
    </header>
    <div class="dock-tools">
      <svg class="t1" viewBox="0 0 20 20"><path d="M1 9l8-2 5 5-5 5.500c-3-.5-7-4-8-8.500z" fill="#f0c545" stroke="#d38b5a" stroke-width=".8"/><path d="M1 9l9-1 2 3-9 2z" fill="#e46a55"/><path d="M12 9l6.500-6.500" stroke="#e0a94e" stroke-width="2.600"/><path d="M9.500 7.500l5 4.500" stroke="#69553a" stroke-width="1.500"/></svg>
      <svg class="t2" viewBox="0 0 20 20"><g fill="#ededed" stroke="#777"><path d="M2.500 7.500h9v9h-9z"/><path d="M5.500 4.500h9V15h-9z"/><path d="M8.500 1.500h8.500v12H8.500z" fill="#ddd"/></g><path d="M13.500 13h5v5h-5z" fill="#ddd" stroke="#555" stroke-width="1.300"/></svg>
      <svg class="t3" viewBox="0 0 22 20"><path d="M1.800 10.500C5 3.500 16 3 19.500 10.500 15 16 6 15.500 1.800 10.500z" fill="#f0f2f4" stroke="#8b8b88"/><circle cx="10.800" cy="9.500" r="4.300" fill="#5f8dbf"/><circle cx="10.800" cy="9.500" r="2" fill="#243e5c"/><path d="M2 7.500C6 1.500 15 1.500 19.500 7.500" fill="none" stroke="#a5a5a2"/><path d="M16 15.500h6l-3 3.500z" fill="#555"/></svg>
      <svg class="t4" viewBox="0 0 20 20"><path d="M2.500 2.500h17v2.700L13 11v7.500H9V11L2.500 5.200z" fill="#6490c2" stroke="#426a98"/><path d="M3 2h16v2.500H3z" fill="#f4cf36"/></svg>
      <svg class="t5" viewBox="0 0 20 20"><text x="2" y="11.500" class="eps">ε</text><path d="M11.500 18.500v-5.500c0-4 7-4 7 0v5.500" fill="none" stroke="#a7a7a4" stroke-width="2.200"/></svg>
      <i class="dd dark"></i>
      <svg class="t6" viewBox="0 0 20 20"><path d="M1 2.500h8M3 4v11h4M3 8.500h4" fill="none" stroke="#777"/><path d="M6 5.500h4v4H6zM6 12.500h4v4H6z" fill="#f2b134" stroke="#c98a1c"/><path d="M12 1.500h4.500v9.500h3l-5.300 6.500L9 11h3z" fill="#5f8fc6" stroke="#386394"/></svg>
      <svg class="t7" viewBox="0 0 20 20"><path d="M1 2.500h8M3 4v11h4M3 8.500h4" fill="none" stroke="#777"/><path d="M6 5.500h4v4H6zM6 12.500h4v4H6z" fill="#f2b134" stroke="#c98a1c"/><path d="M12 17.500h4.500V8h3l-5.300-6.500L9 8h3z" fill="#5f8fc6" stroke="#386394"/></svg>
      <svg class="t8" viewBox="0 0 20 20"><path d="M2 2h13.500v14H2z" fill="#f0f0f0" stroke="#858580" stroke-width="1.400"/><rect x="11" y="12.500" width="8" height="6" rx="2" fill="#dc4b43"/><path d="M12.800 15.500h4.500" stroke="#fff" stroke-width="1.500"/></svg>
    </div>
    <div class="tree">
      <div class="layer">
        <svg class="chk" viewBox="0 0 17 17"><rect x=".5" y=".5" width="16" height="16" fill="#fff" stroke="#c4c4c4"/><path d="M4.500 8l3 4.500 5-9" fill="none" stroke="#111" stroke-width="2.100"/></svg>
        <i class="swatch orange"></i><span>My edit Layer</span>
        <svg class="mem" viewBox="0 0 20 20"><rect x=".5" y=".5" width="19" height="19" fill="#f2f2f2" stroke="#e3e3e3"/><rect x="2.500" y="5.500" width="15" height="8.500" rx="2" fill="#fff" stroke="#8a8a88" stroke-width="1.500"/><path d="M5.500 3v2M8.500 3v2M11.500 3v2M14.500 3v2M5.500 14.500v2M8.500 14.500v2M11.500 14.500v2M14.500 14.500v2" stroke="#8a8a88" stroke-width="1.300"/></svg>
        <i class="end"></i>
      </div>
      <div class="layer sel">
        <svg class="chk" viewBox="0 0 17 17"><rect x=".5" y=".5" width="16" height="16" fill="#fff" stroke="#d8d8d8"/><path d="M4.500 8l3 4.500 5-9" fill="none" stroke="#111" stroke-width="2.100"/></svg>
        <i class="swatch purple"></i><span>openings</span>
        <i class="end"></i>
      </div>
      <svg class="cursor" viewBox="0 0 16 26"><path d="M1 1v20l4.500-4.500L8.500 23l3-1.200L8.700 15.500H14.500z" fill="#fff" stroke="#111" stroke-width="1.100"/></svg>
    </div>
  </section>
  <div class="splitter"><i></i></div>
  <section class="canvas">
    <svg class="map" viewBox="282 171 1086 721">
      <g stroke="#3a302e" stroke-width="1.250" stroke-linejoin="round">
        <path fill="#b5484b" d="M440 401.700L448.300 400 456.700 402.700 478.300 416 492.700 382.700 500 380 506 384.700 519.300 383.300 535 388.300 546 390 557 399 567.700 393.300 571.300 381.700 576.700 383.700 594 401.700 603.300 406.300 613.300 415.700 620.700 424.300 630 428.300 644 423 655.700 420.700 663.300 426.300 676.700 427.300 683.300 423.300 679.700 414.300 680.300 398.700 682.700 392.300 699.300 383.300 708.300 383.300 715.300 393.300 719.300 405.300 727.300 412.300 723.700 420 724.300 433.300 736 447.700 741 463.300 739 470.700 747.700 478.700 760.700 474 785 478.700 797.300 483.300 802.700 474 816 470.300 827.700 470.300 839 458.300 854 436 874 429.300 881.700 415 893.300 386 908.700 368 921.700 374.300 930 383.700 937.300 387.300 948.300 395.700 962.700 395 973.300 401.300 982 398.700 986 390 998.300 379.300 1008.300 380.700 1013.300 390.700 1031.700 401.700 1031.700 421.700 1036 436.700 1046.700 446.700 1058.300 447.300 1088.300 456.300 1098.300 464.700 1104 485.300 1102.700 496.700 1095.700 506.300 1096 515 1103.300 520.300 1104 526.700 1099.300 533 1103 545.300 1110 548.700 1116.700 556 1114 576.700 1108.700 586.700 1116.700 596.700 1116 610 1109.700 625 1108.700 641.300 1100.700 649 1091.700 646.300 1086 652.700 1081.700 661 1068.300 673 900 660 600 640 455 540 450 480.700 442.700 416.700z"/>
        <path fill="#ff9e17" d="M1068.300 673L1064 670.700 1063.700 658 1068.700 653 1065 637.700 1058.300 627.300 1052 620.700 1045 625.700 1039 626.700 1020 591 1033 581.300 1026.700 560.700 1025 543.700 1013.300 531.700 1003.300 532.700 999 536.300 1002.700 543.300 1002.700 552.300 1001 557.700 992.300 570 988 581 979 583.700 963.300 573.300 910.700 560 893.300 554.300 883.300 543 860 534 829 529.300 827.700 540.300 820.700 549.300 807.300 552 794.300 558 776.700 556.300 765 556.700 749.300 555 742.300 557.300 734.300 564 721.700 566 709.300 569.300 696.300 574 677.300 570 670.700 564 665.700 549.300 657.300 535 648 532.700 633.300 538.300 611 538.700 599.300 534.700 587.300 534 575 537 560 541.700 548 541.300 543.700 534.300 542 522.300 543.700 508.300 542 498 526.700 498 513.300 499.700 499.300 503.700 488.300 511 481 516.300 470 511.700 469.300 503.300 471 495 464.700 485 456 484.300 450 480.700 433.300 498.300 426 563.300 436.700 656 499.700 810.700 657.300 839.300 1003.500 824.500z"/>
      </g>
    </svg>
  </section>
</main>
</body>
</html>
```
FILE: styles.css
```css
* { box-sizing: border-box; }
body {
  margin: 0;
  width: 1368px;
  height: 892px;
  overflow: hidden;
  display: flex;
  flex-direction: column;
  background: #f0f0f0;
  color: #111;
  font: 14px "Open Sans", "Noto Sans", sans-serif;
}
.defs { position: absolute; width: 0; height: 0; }

.menubar {
  flex: none;
  display: flex;
  height: 23px;
  padding-left: 12px;
  gap: 17px;
  line-height: 22px;
  letter-spacing: .1px;
  border-bottom: 1px solid #dcdcdc;
  background: #efefef;
}
.menubar span { white-space: nowrap; }
.menubar u { text-underline-offset: 2px; text-decoration-thickness: 1px; }

.toolbar {
  flex: none;
  display: flex;
  align-items: center;
  height: 49px;
  overflow: hidden;
  background: linear-gradient(#fbfbfb, #eeeeee);
  border-bottom: 1px solid #b9b9b9;
}
.tb {
  flex: none;
  width: 41.3px;
  height: 39px;
  padding: 0;
  border: 0;
  background: none;
  display: flex;
  align-items: center;
  justify-content: center;
}
.tb svg { width: 30px; height: 30px; overflow: visible; display: block; }
.tb.on {
  background: #dcdcdc;
  border: 1px solid #b5b5b5;
  border-radius: 4px;
}
.tb.on:not(.pair) { width: 40px; margin-right: 1.3px; }
.tb.pair { width: 40px; margin-left: .5px; }
.handle {
  flex: none;
  width: 6px;
  height: 22px;
  margin: 0 4.5px 0 9px;
  background: radial-gradient(circle at 1px 1px, #cfcfcf .8px, transparent 1.1px) 0 0 / 4px 4px;
}
.handle.first { margin: 0 4.3px 0 5px; }
.handle.last { margin: 0; }
.snap .handle.first { margin-right: 3.6px; }
.snap .handle:not(.first) { margin-left: 8px; margin-right: 3.5px; }
.sep { flex: none; width: 1px; height: 24px; margin: 0 4px; background: #d6d6d6; }
.dd { flex: none; width: 15px; display: flex; justify-content: center; color: #a3a3a3; }
.dd::before { content: ""; border: 4.5px solid transparent; border-top: 5px solid; border-bottom: 0; }
.dd.mid { color: #909090; }
.dd.dark { color: #555; }
.more { flex: none; width: 31px; text-align: center; font: bold 18px/30px "Open Sans", sans-serif; padding-bottom: 2px; }

.glyph-a { font: bold 14px "Open Sans", sans-serif; fill: #5a5a55; }
.one { font: bold 10.5px "Open Sans", sans-serif; fill: #c3c3c0; }
.info { font: italic bold 19px "Liberation Serif", serif; fill: #fff; }
.abc { font: bold 10px "Open Sans", sans-serif; fill: #3a3a3a; }
.abc.r { fill: #e02720; }
.abc.g { fill: #c3c3bf; }
.eps { font: 16px "Open Sans", sans-serif; fill: #555; }

.spin {
  flex: none;
  display: flex;
  width: 100.5px;
  height: 26px;
  margin-left: 2.7px;
  margin-right: 2px;
  border: 1px solid #b9b9b9;
  border-radius: 3px;
  background: #ededed;
  color: #7d7d7d;
  font-size: 13px;
  line-height: 26px;
}
.spin span { flex: 1; padding-left: 6px; }
.spin b {
  width: 17px;
  display: flex;
  flex-direction: column;
  align-items: center;
  justify-content: center;
  gap: 5px;
  border-left: 1px solid #b9b9b9;
  background: #f7f7f7;
}
.spin .up { border: 4px solid transparent; border-bottom-color: #9a9a9a; border-top: 0; }
.spin .down { border: 4px solid transparent; border-top-color: #9a9a9a; border-bottom: 0; }
.combo {
  flex: none;
  display: flex;
  align-items: center;
  justify-content: space-between;
  width: 109px;
  height: 27px;
  margin-right: 2px;
  padding: 2px 8px 0 4px;
  border: 1px solid #c2c2c2;
  border-radius: 3px;
  background: #f9f9f9;
  color: #7d7d7d;
}
.combo i, .drop-on i { border: 4.5px solid transparent; border-top: 5px solid #9a9a9a; border-bottom: 0; }
.drop-on {
  flex: none;
  width: 15px;
  height: 39px;
  display: flex;
  align-items: center;
  justify-content: center;
  border: 1px solid #b5b5b5;
  border-radius: 3px;
  background: #dcdcdc;
}

.work { flex: 1; display: flex; min-height: 0; }
.dock { width: 273px; display: flex; flex-direction: column; }
.dock-title {
  display: flex;
  align-items: center;
  justify-content: space-between;
  height: 23px;
  padding: 0 2px 0 4px;
}
.dock-btns { width: 32px; height: 14px; }
.dock-tools { display: flex; align-items: center; height: 40px; padding: 0 0 1px 9px; }
.dock-tools svg { width: 20px; height: 20px; flex: none; margin-right: 11px; overflow: visible; }
.dock-tools .t2 { margin-right: 12px; }
.dock-tools .t3 { width: 22px; margin-right: 8px; }
.dock-tools .t4 { margin-right: 13px; }
.dock-tools .t5 { margin-right: 3px; }
.dock-tools .dd { margin-right: 8px; }
.tree {
  position: relative;
  flex: 1;
  background: #fff;
  border: 1px solid #bdbdbd;
  border-bottom: 0;
}
.layer {
  display: flex;
  align-items: center;
  height: 22px;
  padding-left: 28px;
  font-weight: 700;
  font-size: 13.7px;
}
.layer.sel { height: 23px; background: linear-gradient(90deg, #0478d7 0, #0478d7 80px, #1683de 100%); color: #f4f9ff; border-bottom: 1px solid #5aa5e6; }
.layer.sel span { padding-top: 1px; text-decoration: underline; text-underline-offset: 2px; font-weight: 600; font-size: 14.2px; }
.chk { width: 17px; height: 17px; margin-right: 8px; }
.swatch { width: 21px; height: 20px; margin-right: 7px; border: 1px solid #8c6a3d; }
.orange { background: #ff9e17; }
.purple { background: #7d6377; border-color: #5f5578; }
.layer span { flex: 1; }
.mem { width: 20px; height: 20px; }
.end { width: 4px; height: 20px; margin-left: 1px; background: #e6e6e6; }
.sel .end { width: 3px; background: #e3effa; margin-right: 1px; }
.cursor { position: absolute; left: 170px; top: 45px; width: 16px; height: 26px; }
.splitter { width: 8px; display: flex; justify-content: center; padding-top: 370px; }
.splitter i { width: 3px; height: 20px; background: radial-gradient(circle at 1px 1px, #ccc .8px, transparent 1.1px) 0 0 / 3px 4px; }
.canvas { flex: 1; border-left: 1px solid #a9a9a9; border-top: 1px solid #a9a9a9; background: #fefefe; }
.map { display: block; width: 1086px; height: 721px; }
```
